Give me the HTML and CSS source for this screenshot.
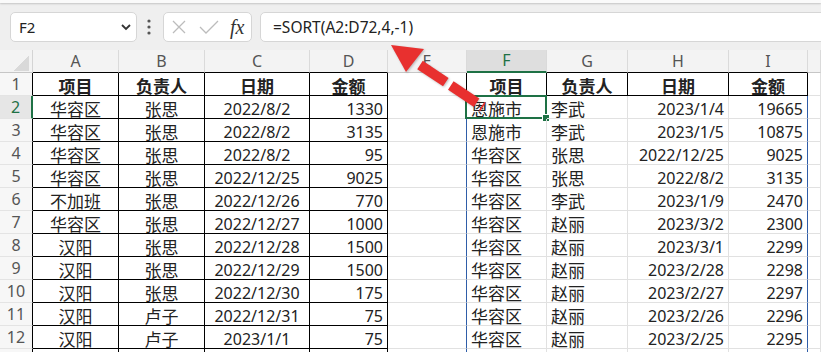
FILE: index.html
```html
<!DOCTYPE html>
<html lang="zh-CN">
<head>
    <meta charset="UTF-8">
    <meta name="viewport" content="width=device-width, initial-scale=1.0">
    <title>SORT</title>
    <link rel="stylesheet" href="styles.css">
</head>
<body>
    <div class="ribbon-edge"></div>

    <div class="formula-bar">
        <div class="name-box">
            <span>F2</span>
            <svg class="chevron" width="12" height="8" viewBox="0 0 12 8">
                <path d="M2 2l4 4 4-4" fill="none" stroke="#333" stroke-width="1.8"/>
            </svg>
        </div>
        <svg class="more" width="6" height="18" viewBox="0 0 6 18">
            <circle cx="3" cy="3" r="1.6"/>
            <circle cx="3" cy="9" r="1.6"/>
            <circle cx="3" cy="15" r="1.6"/>
        </svg>
        <div class="fx-box">
            <svg width="16" height="16" viewBox="0 0 16 16">
                <path d="M2 2l12 12M14 2L2 14" stroke="#bcbcbc" stroke-width="1.3" fill="none"/>
            </svg>
            <svg width="20" height="16" viewBox="0 0 20 16">
                <path d="M1 8l6 6L19 2" stroke="#bcbcbc" stroke-width="1.3" fill="none"/>
            </svg>
            <span class="fx">fx</span>
        </div>
        <div class="formula">=SORT(A2:D72,4,-1)</div>
    </div>

    <div class="sheet" id="sheet"></div>

    <svg class="arrow" width="821" height="352" viewBox="0 0 821 352">
        <line x1="420" y1="65" x2="483" y2="107" stroke="#e8302f" stroke-width="10" stroke-dasharray="31 6"/>
        <polygon points="391,45 424,49 406,72" fill="#e8302f"/>
    </svg>

    <script>
        const leftData = [
            ['项目', '负责人', '日期', '金额'],
            ['华容区', '张思', '2022/8/2', '1330'],
            ['华容区', '张思', '2022/8/2', '3135'],
            ['华容区', '张思', '2022/8/2', '95'],
            ['华容区', '张思', '2022/12/25', '9025'],
            ['不加班', '张思', '2022/12/26', '770'],
            ['华容区', '张思', '2022/12/27', '1000'],
            ['汉阳', '张思', '2022/12/28', '1500'],
            ['汉阳', '张思', '2022/12/29', '1500'],
            ['汉阳', '张思', '2022/12/30', '175'],
            ['汉阳', '卢子', '2022/12/31', '75'],
            ['汉阳', '卢子', '2023/1/1', '75']
        ];

        const rightData = [
            ['项目', '负责人', '日期', '金额'],
            ['恩施市', '李武', '2023/1/4', '19665'],
            ['恩施市', '李武', '2023/1/5', '10875'],
            ['华容区', '张思', '2022/12/25', '9025'],
            ['华容区', '张思', '2022/8/2', '3135'],
            ['华容区', '李武', '2023/1/9', '2470'],
            ['华容区', '赵丽', '2023/3/2', '2300'],
            ['华容区', '赵丽', '2023/3/1', '2299'],
            ['华容区', '赵丽', '2023/2/28', '2298'],
            ['华容区', '赵丽', '2023/2/27', '2297'],
            ['华容区', '赵丽', '2023/2/26', '2296'],
            ['华容区', '赵丽', '2023/2/25', '2295']
        ];

        // J is off the right edge, so its letter is not drawn
        const letters = ['', 'A', 'B', 'C', 'D', 'E', 'F', 'G', 'H', 'I', ''];
        const sheet = document.getElementById('sheet');

        for (let r = 0; r <= 13; r++) {
            for (let c = 0; c <= 10; c++) {
                const cell = document.createElement('div');
                const cls = ['cell'];
                let text = '';

                if (r === 0 && c === 0) {
                    cls.push('corner');
                } else if (r === 0) {
                    cls.push('col-head');
                    text = letters[c];
                    if ((c >= 1 && c <= 4) || (c >= 6 && c <= 9)) cls.push('bk-b');
                    if (c === 6) cls.push('active-col');
                } else if (c === 0) {
                    cls.push('row-head', 'bk-r');
                    if (r <= 12) text = r;
                    if (r === 2) cls.push('active-row');
                } else {
                    // left table A:D
                    if (c >= 1 && c <= 4) {
                        cls.push('bk-r', 'bk-b');
                        const row = leftData[r - 1];
                        if (row) text = row[c - 1];
                        cls.push(c === 4 && r > 1 ? 'right' : 'center');
                        if (r > 1 && c >= 3) cls.push('num');
                    }
                    // spill result F:I
                    if (c >= 6 && c <= 9) {
                        const row = rightData[r - 1];
                        if (row) text = row[c - 6];
                        if (r === 1) {
                            cls.push('bk-r', 'bk-b', 'center');
                        } else {
                            cls.push(c >= 8 ? 'right' : 'left');
                            if (c >= 8) cls.push('num');
                        }
                    }
                    if (r === 1) cls.push('bold');
                    if (c === 5 && r === 1) cls.push('bk-r');
                    if ((c === 5 || c === 9) && r >= 2) cls.push('bl-r');
                }

                cell.className = cls.join(' ');
                cell.textContent = text;

                if (r === 2 && c === 6) {
                    const sel = document.createElement('div');
                    sel.className = 'selection';
                    cell.appendChild(sel);
                }
                sheet.appendChild(cell);
            }
        }
    </script>
</body>
</html>
```

FILE: styles.css
```css
body {
    margin: 0;
    width: 821px;
    height: 352px;
    overflow: hidden;
    position: relative;
    background-color: #efefef;
    font-family: "Noto Sans", "Noto Sans CJK SC", sans-serif;
    color: #222;
}

.ribbon-edge {
    height: 3px;
    background: #fafafa;
    box-shadow: 0 1px 2px rgba(0, 0, 0, 0.18);
}

/* formula bar */

.formula-bar {
    display: flex;
    align-items: center;
    height: 30px;
    margin-top: 9px;
    padding-left: 10px;
}

.name-box {
    box-sizing: border-box;
    width: 127px;
    height: 30px;
    display: flex;
    align-items: center;
    justify-content: space-between;
    padding: 0 4px 0 8px;
    background: #fff;
    border: 1px solid #d6d6d6;
    border-radius: 5px;
    font-size: 15px;
}

.more {
    margin-left: 9px;
    fill: #555;
}

.fx-box {
    box-sizing: border-box;
    width: 89px;
    height: 30px;
    margin-left: 11px;
    display: flex;
    align-items: center;
    gap: 12px;
    padding-left: 7px;
    background: #fff;
    border: 1px solid #d6d6d6;
    border-radius: 5px;
}

.fx {
    font-family: "Liberation Serif", serif;
    font-style: italic;
    font-size: 20px;
    color: #333;
    margin-left: -1px;
}

.formula {
    box-sizing: border-box;
    flex: 1;
    height: 30px;
    margin-left: 8px;
    margin-right: -10px;
    padding-left: 12px;
    line-height: 28px;
    background: #fff;
    border: 1px solid #d6d6d6;
    border-radius: 5px;
    font-size: 15.5px;
}

/* sheet grid */

.sheet {
    margin-top: 8px;
    display: grid;
    grid-template-columns: 33px 86px 86px 105px 78px 79px 80px 81px 101px 79px 1fr;
    grid-auto-rows: 23px;
    background: #fff;
}

.cell {
    box-sizing: border-box;
    position: relative;
    display: flex;
    align-items: flex-end;
    padding: 0 4px;
    border-right: 1px solid #e1e1e1;
    border-bottom: 1px solid #e1e1e1;
    font-size: 17px;
    line-height: 17px;
    white-space: nowrap;
}

.corner {
    background: #f3f3f3 linear-gradient(135deg, transparent 55%, #d9d9d9 55%) no-repeat;
    background-size: 17px 17px;
    background-position: 12px 4px;
    border-right-color: #d4d4d4;
    border-bottom-color: #c6c6c6;
}

.col-head {
    justify-content: center;
    align-items: center;
    background: #f3f3f3;
    border-right-color: #dadada;
    border-bottom-color: #c6c6c6;
    color: #555;
    font-size: 16px;
}

.row-head {
    justify-content: center;
    align-items: center;
    background: #f7f7f7;
    border-bottom-color: #e4e4e4;
    color: #555;
    font-size: 16px;
}

.center {
    justify-content: center;
}

.left {
    justify-content: flex-start;
}

.right {
    justify-content: flex-end;
}

.num {
    font-size: 16px;
}

.bold {
    font-weight: bold;
}

.bk-r {
    border-right-color: #000;
}

.bk-b {
    border-bottom-color: #000;
}

.bl-r {
    border-right-color: #2f5da8;
}

.active-col {
    background: #dedede;
    color: #1e7145;
    border-bottom: 2px solid #1e7145;
}

.active-row {
    background: #e6e6e6;
    color: #1e7145;
    border-right: 2px solid #1e7145;
}

.selection {
    position: absolute;
    left: -2px;
    top: -1px;
    right: -1px;
    bottom: -1px;
    border: 2px solid #1e7145;
}

.selection::after {
    content: "";
    position: absolute;
    right: -5px;
    bottom: -5px;
    width: 6px;
    height: 6px;
    background: #1e7145;
    border: 1px solid #fff;
}

.arrow {
    position: absolute;
    left: 0;
    top: 0;
    pointer-events: none;
    filter: drop-shadow(1px 1px 1px rgba(0, 0, 0, 0.25));
}
```
